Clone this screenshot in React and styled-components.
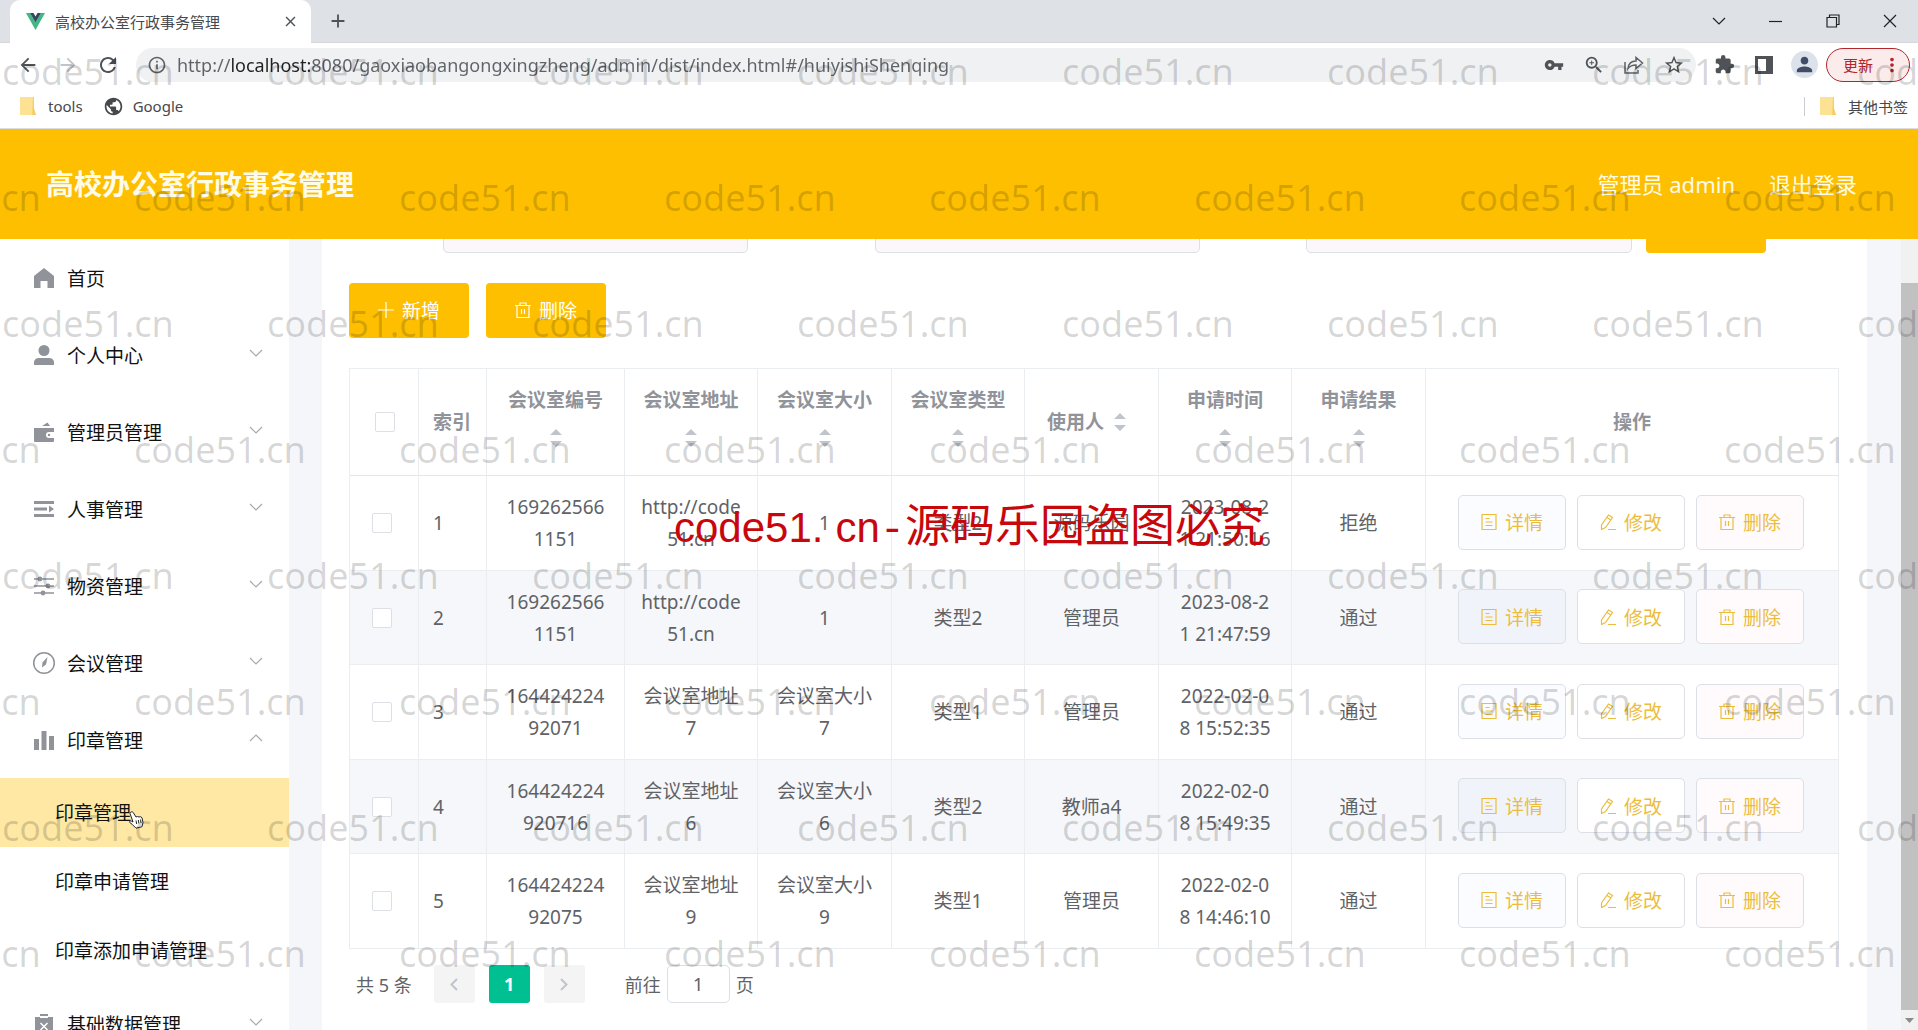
import React from 'react';
import styled, { createGlobalStyle } from 'styled-components';
import {
  MdArrowBack, MdArrowForward, MdRefresh, MdOutlineInfo, MdVpnKey, MdZoomIn,
  MdStarBorder, MdExtension, MdPerson, MdPublic, MdClose, MdAdd, MdMoreVert,
} from 'react-icons/md';

const yellow = '#fdbf00';

const GlobalStyle = createGlobalStyle`
  * {
    box-sizing: border-box;
  }
  body {
    margin: 0;
    overflow: hidden;
    background: #fff;
    font-family: "Noto Sans", "Noto Sans CJK SC", sans-serif;
  }
  button, input {
    font-family: inherit;
    margin: 0;
  }
  button {
    padding: 0;
    cursor: pointer;
  }
  a {
    text-decoration: none;
  }
  svg {
    flex: none;
    display: block;
  }
`;

const Page = styled.div`
  position: relative;
  height: 100vh;
  display: flex;
  flex-direction: column;
  overflow: hidden;
`;

/* browser */

const TabStrip = styled.div`
  flex: none;
  height: 43px;
  padding-left: 10px;
  display: flex;
  align-items: center;
  background: #dee1e6;
  border-bottom: 1px solid #d5d7db;
`;

const Tab = styled.div`
  width: 301px;
  height: 43px;
  padding: 0 12px 0 16px;
  display: flex;
  align-items: center;
  gap: 10px;
  background: #fff;
  border-radius: 10px 10px 0 0;
  font-size: 15px;
  color: #45494d;
`;

const TabTitle = styled.span`
  flex: 1;
  white-space: nowrap;
`;

const IconButton = styled.button`
  flex: none;
  width: ${(props) => props.$width || 40}px;
  height: ${(props) => props.$height || 34}px;
  display: flex;
  align-items: center;
  justify-content: center;
  border: 0;
  background: none;
  color: ${(props) => props.$color || '#4f5357'};
`;

const WindowButtons = styled.div`
  display: flex;
  margin-left: auto;
`;

const Toolbar = styled.div`
  flex: none;
  height: 43px;
  padding: 0 8px;
  display: flex;
  align-items: center;
`;

const Address = styled.div`
  flex: 1;
  height: 34px;
  margin: 0 8px;
  padding: 0 2px 0 11px;
  display: flex;
  align-items: center;
  gap: 10px;
  border-radius: 17px;
  background: #eff1f3;
  color: #5f6368;
`;

const AddressInput = styled.input`
  flex: 1;
  min-width: 0;
  border: 0;
  padding: 0;
  outline: none;
  font-size: 18px;
  color: transparent;
  background: linear-gradient(90deg, #5f6368 54px, #202124 54px, #202124 133px, #5f6368 133px);
  background-clip: text;
  -webkit-background-clip: text;
`;

const AddressButtons = styled.div`
  display: flex;
`;

const Avatar = styled.span`
  width: 27px;
  height: 27px;
  display: flex;
  align-items: center;
  justify-content: center;
  border-radius: 50%;
  background: #dce2ec;
  color: #434c66;
`;

const UpdateButton = styled.button`
  width: 84px;
  height: 34px;
  margin-left: 2px;
  padding: 0 6px 0 16px;
  display: flex;
  align-items: center;
  justify-content: space-between;
  border: 1px solid #b3262c;
  border-radius: 17px;
  background: #fbebeb;
  font-size: 15px;
  color: #b3262c;
`;

const Bookmarks = styled.nav`
  flex: none;
  height: 43px;
  padding: 0 10px 2px 20px;
  display: flex;
  align-items: center;
  border-bottom: 1px solid #ddd;
`;

const Bookmark = styled.a`
  display: flex;
  align-items: center;
  gap: ${(props) => props.$gap || 12}px;
  margin-right: 20px;
  font-size: 15px;
  color: #45494d;
`;

const OtherBookmarks = styled.a`
  height: 19px;
  margin-left: auto;
  padding-left: 15px;
  display: flex;
  align-items: center;
  gap: 12px;
  border-left: 1px solid #c9ccd0;
  font-size: 15px;
  color: #45494d;
`;

/* header */

const Header = styled.header`
  flex: none;
  height: 110px;
  padding: 0 61px 2px 46px;
  display: flex;
  align-items: center;
  gap: 34px;
  background: ${yellow};
  color: #fffbe6;
`;

const SiteName = styled.h1`
  flex: 1;
  margin: 0;
  font-size: 28px;
  font-weight: 700;
`;

const HeaderLink = styled.a`
  font-size: 22px;
  color: #fffbe6;
`;

const Body = styled.div`
  flex: 1;
  min-height: 0;
  display: flex;
  overflow: hidden;
  background: #f4f6fa;
`;

/* sidebar */

const Sidebar = styled.nav`
  flex: none;
  width: 289px;
  overflow: hidden;
  background: #fff;
`;

const MenuItem = styled.a`
  height: 77px;
  padding: 0 26px 0 34px;
  display: flex;
  align-items: center;
  gap: 13px;
  font-size: 19px;
  color: #111;
  white-space: nowrap;
`;

const MenuText = styled.span`
  flex: 1;
`;

const Arrow = styled.svg`
  margin-bottom: 4px;
`;

const SubItem = styled.a`
  position: relative;
  height: 69px;
  padding: 0 0 2px 55px;
  display: flex;
  align-items: center;
  background: ${(props) => (props.$active ? '#fee8a3' : '#fff')};
  font-size: 19px;
  color: #111;
`;

const Pointer = styled.svg`
  position: absolute;
  left: 128px;
  top: 33px;
`;

/* content */

const Main = styled.main`
  flex: 1;
  min-width: 0;
  margin: 0 34px 0 33px;
  padding: 0 28px 0 27px;
  overflow: hidden;
  background: #fff;
`;

/* the form is scrolled half under the header */
const SearchForm = styled.form`
  margin: -42px 73px 30px 94px;
  display: flex;
  gap: 14px;
`;

const Fields = styled.div`
  flex: 1;
  display: grid;
  grid-template-columns: repeat(3, 1fr);
  column-gap: 106px;
`;

const FieldInput = styled.input`
  width: ${(props) => (props.$short ? 'calc(100% - 21px)' : '100%')};
  min-width: 0;
  height: 56px;
  border: 1px solid #dcdfe6;
  border-radius: 5px;
  background: #fbf7fb;
`;

const YellowButton = styled.button`
  width: 120px;
  height: ${(props) => props.$height || 55}px;
  padding-bottom: 2px;
  display: flex;
  align-items: center;
  justify-content: center;
  gap: 8px;
  border: 0;
  border-radius: 4px;
  background: ${yellow};
  font-size: 19px;
  color: #fff;
`;

const Actions = styled.div`
  display: flex;
  gap: 17px;
  margin-bottom: 30px;
`;

const Table = styled.table`
  width: 100%;
  table-layout: fixed;
  border-collapse: separate;
  border-spacing: 0;
  border-top: 1px solid #ebeef0;
  border-left: 1px solid #ebeef0;
  font-size: 19px;
  line-height: 32px;
  color: #606266;
`;

const Th = styled.th`
  height: 107px;
  padding: 0 0 0 ${(props) => props.$left || 0}px;
  text-align: ${(props) => (props.$left ? 'left' : 'center')};
  border-right: 1px solid #ebeef0;
  border-bottom: 1px solid #e4e6ea;
  color: #909399;
  font-weight: 700;
`;

const Sortable = styled.div`
  display: flex;
  flex-direction: ${(props) => (props.$inline ? 'row' : 'column')};
  align-items: center;
  justify-content: center;
  gap: ${(props) => (props.$inline ? 10 : 0)}px;
`;

const CaretBox = styled.span`
  height: ${(props) => (props.$inline ? 32 : 44)}px;
  padding-right: ${(props) => (props.$inline ? 10 : 0)}px;
  display: flex;
  align-items: center;
`;

const Row = styled.tr`
  height: 95px;
  background: #fff;
  &:nth-child(even) {
    height: 94px;
    background: #f5f7fa;
  }
`;

const Td = styled.td`
  padding: 0 0 0 ${(props) => props.$left || 0}px;
  text-align: ${(props) => (props.$left ? 'left' : 'center')};
  border-right: 1px solid #ebeef0;
  border-bottom: 1px solid #ebeef0;
  white-space: pre-line;
`;

const Checkbox = styled.input`
  appearance: none;
  display: block;
  width: 20px;
  height: 20px;
  border: 1px solid #dcdfe6;
  border-radius: 2px;
  background: #fff;
`;

const Operations = styled.div`
  padding: 0 2px 2px 0;
  display: flex;
  justify-content: center;
  gap: 11px;
`;

const OperationButton = styled.button`
  width: 108px;
  height: 55px;
  display: flex;
  align-items: center;
  justify-content: center;
  gap: 8px;
  border: 1px solid #dcdfe6;
  border-radius: 5px;
  background: ${(props) => props.$bg};
  font-size: 19px;
  color: #ecbd3c;
`;

const Pagination = styled.div`
  margin-top: 16px;
  padding-left: 7px;
  display: flex;
  align-items: center;
  font-size: 18px;
  color: #606266;
`;

const PageButton = styled.button`
  width: 41px;
  height: 38px;
  margin-left: ${(props) => props.$gap || 14}px;
  display: flex;
  align-items: center;
  justify-content: center;
  border: 0;
  border-radius: 3px;
  background: ${(props) => (props.$active ? '#00bf91' : '#f4f4f5')};
  font-size: 18px;
  font-weight: 700;
  color: ${(props) => (props.$active ? '#fff' : '#c0c4cc')};
`;

const Jump = styled.label`
  margin-left: 40px;
  display: flex;
  align-items: center;
  gap: 6px;
`;

const JumpInput = styled.input`
  width: 63px;
  height: 38px;
  border: 1px solid #dcdfe6;
  border-radius: 5px;
  text-align: center;
  font-size: 18px;
  color: #606266;
`;

const Scrollbar = styled.div`
  flex: none;
  width: 17px;
  padding-top: 44px;
  display: flex;
  flex-direction: column;
  background: #f1f1f1;
`;

const Thumb = styled.div`
  flex: 1;
  background: #c1c1c1;
`;

const ScrollDown = styled.div`
  height: 20px;
  display: flex;
  align-items: center;
  justify-content: center;
`;

/* watermark */

const Watermark = styled.div`
  position: absolute;
  inset: 0;
  padding-top: 47px;
  overflow: hidden;
  pointer-events: none;
  font-size: 36px;
  line-height: 50px;
  color: rgba(0, 0, 0, 0.16);
`;

const MarkRow = styled.div`
  height: 126px;
  display: flex;
  margin-left: ${(props) => (props.$shifted ? -131 : 2)}px;
  span {
    flex: none;
    width: 265px;
  }
`;

const Notice = styled.div`
  position: absolute;
  left: 674px;
  top: 490px;
  display: flex;
  align-items: baseline;
  pointer-events: none;
  white-space: nowrap;
  line-height: 66px;
  color: #c8070c;
  font-family: "Noto Sans CJK SC", sans-serif;
  font-size: 45px;
`;

const NoticeLatin = styled.span`
  padding-right: ${(props) => props.$gap || 0}px;
  font-family: ${(props) => (props.$mono ? '"Liberation Mono", monospace' : '"Liberation Sans", sans-serif')};
  font-size: 42px;
`;

const VueLogo = () => (
  <svg width="19" height="17" viewBox="0 0 19 17">
    <path d="M0 0h4l5.500 9.500L15 0h4L9.500 17z" fill="#41b883" />
    <path d="M4 0h3.500l2 3.500 2-3.500H15L9.500 9.500z" fill="#34495e" />
  </svg>
);

const Folder = () => (
  <svg width="16" height="18" viewBox="0 0 16 18">
    <path d="M0 1a1 1 0 0 1 1-1h12v12l3 5v1H1a1 1 0 0 1-1-1z" fill="#fde293" />
    <path d="M13 0h1v11l2 7h-4z" fill="#f3cf66" />
  </svg>
);

const ShareIcon = () => (
  <svg width="20" height="18" viewBox="0 0 20 18" fill="none" stroke="#5f6368" strokeWidth="1.500">
    <path d="M1 6v11h13v-3" />
    <path d="M4 12.500c.5-5 3.500-7.500 8-7.500V1.500L18.500 7 12 12.500V9c-3.500 0-6 1-8 3.500z" />
  </svg>
);

const PanelIcon = () => (
  <svg width="18" height="18" viewBox="0 0 18 18">
    <path d="M0 0h18v18H0zM3 3v12h8V3z" fill="#4f5357" fillRule="evenodd" />
  </svg>
);

const windowIcons = {
  展开: <path d="M1 4l6 6 6-6" />,
  最小化: <path d="M0 7.500h13" />,
  还原: <path d="M1 3.500h9.500V13H1zM3.500 3.500V1h9.500v9.500h-2.500" />,
  关闭: <path d="M1 1l12 12M13 1L1 13" />,
};

const menuIcons = {
  home: <path d="M10 0l10 8v12h-6.500v-7h-7v7H0V8z" />,
  user: (
    <>
      <circle cx="10" cy="5.500" r="5.500" />
      <path d="M0 20v-2.500c0-3 2-4.500 5-4.500h10c3 0 5 1.500 5 4.500V20z" />
    </>
  ),
  wallet: (
    <>
      <path d="M8 4l5.500-3.500L16 4z" />
      <path d="M0 6h20v4h-5a3 3 0 0 0 0 6h5v3a1 1 0 0 1-1 1H1a1 1 0 0 1-1-1z" />
      <circle cx="15" cy="13" r="1.200" />
    </>
  ),
  list: <path d="M0 2h20v3H0zM0 8.500h13v3H0zM0 15h20v3H0zM15 6.500l5 3.500-5 3.500z" />,
  sliders: (
    <>
      <path d="M0 2.300h20v1.400H0zM0 9.300h20v1.400H0zM0 16.300h20v1.400H0z" />
      <circle cx="6" cy="3" r="2.400" />
      <circle cx="14" cy="10" r="2.400" />
      <circle cx="9" cy="17" r="2.400" />
    </>
  ),
  compass: (
    <>
      <circle cx="10" cy="10" r="10.300" fill="none" stroke="#909399" strokeWidth="1.500" />
      <path d="M13.500 4L12 11.500 8 14.500 8.500 9.500z" />
    </>
  ),
  chart: <path d="M0 9h5v11H0zM7.500 1h5v19h-5zM15 6h5v14h-5z" />,
  order: (
    <>
      <path d="M6 0h8v2H6zM1 3h5v1h8V3h5v17H1z" />
      <path d="M6.500 9l7 7M13.500 9l-7 7" stroke="#fff" strokeWidth="1.500" fill="none" />
    </>
  ),
};

const MenuIcon = ({ name }) => (
  <svg width="20" height="20" viewBox="0 0 20 20" fill="#909399" overflow="visible">{menuIcons[name]}</svg>
);

const Chevron = ({ up }) => (
  <Arrow width="14" height="8" viewBox="0 0 14 8" fill="none" stroke="#a6a9ae" strokeWidth="1.200">
    <path d={up ? 'M1 7l6-6 6 6' : 'M1 1l6 6 6-6'} />
  </Arrow>
);

const buttonIcons = {
  plus: <path d="M8 0v16M0 8h16" />,
  detail: <path d="M1 .5h14v15H1zM4.500 4.500h4M4.500 8h7M4.500 11.500h7" />,
  edit: <path d="M8.500 1L12.500 3.500 5.500 13.500 1.500 15.500l0-4.500zM7 3.500L11 6M8 15.500h8" />,
  trash: <path d="M0 3.500h16M5 3.500V1h6v2.500M2 3.500v12h12v-12M6.500 7v5M9.500 7v5" />,
};

const ButtonIcon = ({ name }) => (
  <svg width="16" height="16" viewBox="0 0 16 16" fill="none" stroke="currentColor" strokeWidth="1.200">
    {buttonIcons[name]}
  </svg>
);

const Carets = () => (
  <svg width="12" height="18" viewBox="0 0 12 18" fill="#c0c4cc">
    <path d="M6 0l6 6H0zM6 18l6-6H0z" />
  </svg>
);

const columns = [
  { name: '会议室编号', width: 138 },
  { name: '会议室地址', width: 133 },
  { name: '会议室大小', width: 134 },
  { name: '会议室类型', width: 133 },
  { name: '使用人', width: 134, inline: true },
  { name: '申请时间', width: 133 },
  { name: '申请结果', width: 134 },
];

const rows = [
  ['169262566\n1151', 'http://code\n51.cn', '1', '类型2', '源码乐园', '2023-08-2\n1 21:50:16', '拒绝'],
  ['169262566\n1151', 'http://code\n51.cn', '1', '类型2', '管理员', '2023-08-2\n1 21:47:59', '通过'],
  ['164424224\n92071', '会议室地址\n7', '会议室大小\n7', '类型1', '管理员', '2022-02-0\n8 15:52:35', '通过'],
  ['164424224\n920716', '会议室地址\n6', '会议室大小\n6', '类型2', '教师a4', '2022-02-0\n8 15:49:35', '通过'],
  ['164424224\n92075', '会议室地址\n9', '会议室大小\n9', '类型1', '管理员', '2022-02-0\n8 14:46:10', '通过'],
];

const menu = [
  { icon: 'user', text: '个人中心' },
  { icon: 'wallet', text: '管理员管理' },
  { icon: 'list', text: '人事管理' },
  { icon: 'sliders', text: '物资管理' },
  { icon: 'compass', text: '会议管理' },
  { icon: 'chart', text: '印章管理', children: ['印章管理', '印章申请管理', '印章添加申请管理'] },
  { icon: 'order', text: '基础数据管理' },
];

function Browser() {
  return (
    <>
      <TabStrip>
        <Tab>
          <VueLogo />
          <TabTitle>高校办公室行政事务管理</TabTitle>
          <IconButton $width={18} aria-label="关闭标签页"><MdClose size={17} /></IconButton>
        </Tab>
        <IconButton $width={54} aria-label="新标签页"><MdAdd size={22} /></IconButton>
        <WindowButtons>
          {Object.keys(windowIcons).map((name) => (
            <IconButton key={name} $width={57} $color="#222" aria-label={name}>
              <svg width="14" height="14" viewBox="0 0 14 14" fill="none" stroke="currentColor" strokeWidth="1.200">
                {windowIcons[name]}
              </svg>
            </IconButton>
          ))}
        </WindowButtons>
      </TabStrip>
      <Toolbar>
        <IconButton aria-label="后退"><MdArrowBack size={22} /></IconButton>
        <IconButton $color="#c0c3c7" aria-label="前进"><MdArrowForward size={22} /></IconButton>
        <IconButton aria-label="刷新"><MdRefresh size={24} /></IconButton>
        <Address>
          <MdOutlineInfo size={20} />
          <AddressInput
            aria-label="地址"
            defaultValue="http://localhost:8080/gaoxiaobangongxingzheng/admin/dist/index.html#/huiyishiShenqing"
          />
          <AddressButtons>
            <IconButton aria-label="密码"><MdVpnKey size={20} /></IconButton>
            <IconButton aria-label="缩放"><MdZoomIn size={22} /></IconButton>
            <IconButton aria-label="分享"><ShareIcon /></IconButton>
            <IconButton aria-label="收藏"><MdStarBorder size={22} /></IconButton>
          </AddressButtons>
        </Address>
        <IconButton aria-label="扩展"><MdExtension size={21} /></IconButton>
        <IconButton aria-label="侧边栏"><PanelIcon /></IconButton>
        <IconButton aria-label="用户"><Avatar><MdPerson size={23} /></Avatar></IconButton>
        <UpdateButton>
          更新
          <MdMoreVert size={22} />
        </UpdateButton>
      </Toolbar>
      <Bookmarks>
        <Bookmark href="#tools">
          <Folder />
          tools
        </Bookmark>
        <Bookmark href="#google" $gap={9}>
          <MdPublic size={21} />
          Google
        </Bookmark>
        <OtherBookmarks href="#other">
          <Folder />
          其他书签
        </OtherBookmarks>
      </Bookmarks>
    </>
  );
}

function SideMenu() {
  return (
    <Sidebar>
      <MenuItem href="#home">
        <MenuIcon name="home" />
        <MenuText>首页</MenuText>
      </MenuItem>
      {menu.map((item) => (
        <React.Fragment key={item.text}>
          <MenuItem href="#menu">
            <MenuIcon name={item.icon} />
            <MenuText>{item.text}</MenuText>
            <Chevron up={!!item.children} />
          </MenuItem>
          {item.children && item.children.map((child, i) => (
            <SubItem key={child} href="#sub" $active={i === 0}>
              {child}
              {i === 0 && (
                <Pointer width="16" height="18" viewBox="0 0 16 18">
                  <path
                    d="M3 1c1-.6 2 0 2.500 1l2.500 4 1.500-.5 1.500.5 1.500-.3 1.500 1 1 5-1 4-6 1.500-4-4-2.500-2c0-1 1-1.500 2-1l1.500.8L2 2.500C2 2 2.300 1.300 3 1z"
                    fill="#fff"
                    stroke="#222"
                  />
                  <path d="M8 9.500l.7 3.500M10.300 9l.6 3.500M12.500 8.500l.5 3.500" stroke="#222" fill="none" />
                </Pointer>
              )}
            </SubItem>
          ))}
        </React.Fragment>
      ))}
    </Sidebar>
  );
}

function MeetingTable() {
  return (
    <Table>
      <colgroup>
        <col width="69" />
        <col width="68" />
        {columns.map((col) => <col key={col.name} width={col.width} />)}
        <col />
      </colgroup>
      <thead>
        <tr>
          <Th $left={25}><Checkbox type="checkbox" aria-label="全选" /></Th>
          <Th $left={14}>索引</Th>
          {columns.map((col) => (
            <Th key={col.name}>
              <Sortable $inline={col.inline}>
                {col.name}
                <CaretBox $inline={col.inline}><Carets /></CaretBox>
              </Sortable>
            </Th>
          ))}
          <Th>操作</Th>
        </tr>
      </thead>
      <tbody>
        {rows.map((row, i) => (
          <Row key={row[5]}>
            <Td $left={22}><Checkbox type="checkbox" aria-label={`选择 ${i + 1}`} /></Td>
            <Td $left={14}>{i + 1}</Td>
            {row.map((text, n) => <Td key={columns[n].name}>{text}</Td>)}
            <Td>
              <Operations>
                <OperationButton $bg={i % 2 ? '#f0f4fa' : '#fbfcff'}>
                  <ButtonIcon name="detail" />
                  详情
                </OperationButton>
                <OperationButton $bg="#fff">
                  <ButtonIcon name="edit" />
                  修改
                </OperationButton>
                <OperationButton $bg="#fffbfc">
                  <ButtonIcon name="trash" />
                  删除
                </OperationButton>
              </Operations>
            </Td>
          </Row>
        ))}
      </tbody>
    </Table>
  );
}

export default function App() {
  return (
    <Page>
      <GlobalStyle />
      <Browser />
      <Header>
        <SiteName>高校办公室行政事务管理</SiteName>
        <HeaderLink href="#admin">管理员 admin</HeaderLink>
        <HeaderLink href="#logout">退出登录</HeaderLink>
      </Header>
      <Body>
        <SideMenu />
        <Main>
          <SearchForm>
            <Fields>
              <FieldInput $short aria-label="会议室编号" />
              <FieldInput aria-label="会议室地址" />
              <FieldInput aria-label="会议室类型" />
            </Fields>
            <YellowButton type="button" $height={56} aria-label="查询" />
          </SearchForm>
          <Actions>
            <YellowButton>
              <ButtonIcon name="plus" />
              新增
            </YellowButton>
            <YellowButton>
              <ButtonIcon name="trash" />
              删除
            </YellowButton>
          </Actions>
          <MeetingTable />
          <Pagination>
            共 5 条
            <PageButton $gap={22} aria-label="上一页">
              <svg width="8" height="13" viewBox="0 0 8 13" fill="none" stroke="currentColor" strokeWidth="2">
                <path d="M7 1L1.500 6.500 7 12" />
              </svg>
            </PageButton>
            <PageButton $active>1</PageButton>
            <PageButton aria-label="下一页">
              <svg width="8" height="13" viewBox="0 0 8 13" fill="none" stroke="currentColor" strokeWidth="2">
                <path d="M1 1l5.500 5.500L1 12" />
              </svg>
            </PageButton>
            <Jump>
              前往
              <JumpInput defaultValue="1" />
              页
            </Jump>
          </Pagination>
        </Main>
        <Scrollbar>
          <Thumb />
          <ScrollDown>
            <svg width="9" height="5" viewBox="0 0 9 5" fill="#8a8a8a"><path d="M0 0h9L4.500 5z" /></svg>
          </ScrollDown>
        </Scrollbar>
      </Body>
      <Watermark aria-hidden="true">
        {[0, 1, 2, 3, 4, 5, 6, 7].map((row) => (
          <MarkRow key={row} $shifted={row % 2 === 1}>
            {[0, 1, 2, 3, 4, 5, 6, 7].map((n) => <span key={n}>code51.cn</span>)}
          </MarkRow>
        ))}
      </Watermark>
      <Notice>
        <NoticeLatin $gap={12}>code51.</NoticeLatin>
        <NoticeLatin>cn</NoticeLatin>
        <NoticeLatin $mono>-</NoticeLatin>
        源码乐园盗图必究
      </Notice>
    </Page>
  );
}
